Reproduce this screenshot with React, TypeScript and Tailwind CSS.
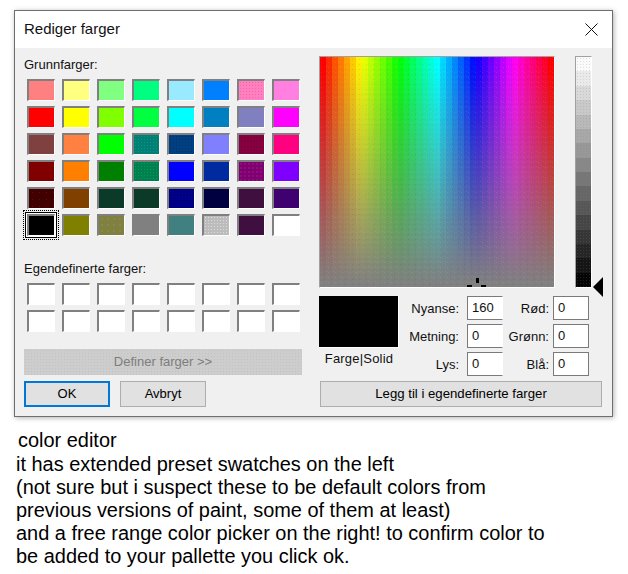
const DOT_PINK = 'bg-[radial-gradient(circle,#ff5f9f_0.6px,transparent_0.9px)] bg-[length:3px_3px]'
const DOT_TEAL = 'bg-[radial-gradient(circle,#0a8f9f_0.6px,transparent_0.9px)] bg-[length:3px_3px]'
const DOT_NAVY = 'bg-[radial-gradient(circle,#003070_0.6px,transparent_0.9px)] bg-[length:3px_3px]'
const DOT_GREEN = 'bg-[radial-gradient(circle,#00a050_0.6px,transparent_0.9px)] bg-[length:3px_3px]'
const DOT_WINE = 'bg-[radial-gradient(circle,#a00030_0.6px,transparent_0.9px)] bg-[length:3px_3px]'
const DOT_PURPLE = 'bg-[radial-gradient(circle,#a830a8_0.5px,transparent_0.8px)] bg-[length:4px_4px]'
const DOT_BLUE = 'bg-[radial-gradient(circle,#0000b0_0.6px,transparent_0.9px)] bg-[length:3px_3px]'
const DOT_ORANGE = 'bg-[radial-gradient(circle,#f09050_0.6px,transparent_0.9px)] bg-[length:5px_5px]'
const DOT_RED = 'bg-[radial-gradient(circle,#800000_0.6px,transparent_0.9px)] bg-[length:7px_7px]'
const DOT_OLIVE = 'bg-[radial-gradient(circle,#90a060_0.5px,transparent_0.8px)] bg-[length:6px_6px]'
const DOT_SILVER = 'bg-[radial-gradient(circle,#dcdcdc_0.6px,transparent_0.9px)] bg-[length:3px_3px]'

const presets: { color: string; dots?: string }[] = [
  { color: 'bg-[#ff8080]' },
  { color: 'bg-[#ffff80]' },
  { color: 'bg-[#80ff80]' },
  { color: 'bg-[#00ff80]' },
  { color: 'bg-[#99eaff]' },
  { color: 'bg-[#0080ff]' },
  { color: 'bg-[#ff80c0]', dots: DOT_PINK },
  { color: 'bg-[#ff80e0]' },
  { color: 'bg-[#ff0000]' },
  { color: 'bg-[#ffff00]' },
  { color: 'bg-[#80ff00]' },
  { color: 'bg-[#00ff40]' },
  { color: 'bg-[#00ffff]' },
  { color: 'bg-[#0080c0]' },
  { color: 'bg-[#8080c0]' },
  { color: 'bg-[#ff00ff]' },
  { color: 'bg-[#804040]' },
  { color: 'bg-[#ff8040]', dots: DOT_ORANGE },
  { color: 'bg-[#00ff00]' },
  { color: 'bg-[#008070]', dots: DOT_TEAL },
  { color: 'bg-[#004080]', dots: DOT_NAVY },
  { color: 'bg-[#8080ff]' },
  { color: 'bg-[#800040]', dots: DOT_WINE },
  { color: 'bg-[#ff0080]' },
  { color: 'bg-[#800000]' },
  { color: 'bg-[#ff8000]' },
  { color: 'bg-[#008000]' },
  { color: 'bg-[#008050]', dots: DOT_GREEN },
  { color: 'bg-[#0000ff]' },
  { color: 'bg-[#002ba0]' },
  { color: 'bg-[#800070]', dots: DOT_PURPLE },
  { color: 'bg-[#8000ff]' },
  { color: 'bg-[#400000]', dots: DOT_RED },
  { color: 'bg-[#804000]' },
  { color: 'bg-[#0b3b28]' },
  { color: 'bg-[#0b3b28]' },
  { color: 'bg-[#000080]', dots: DOT_BLUE },
  { color: 'bg-[#000040]' },
  { color: 'bg-[#3f103f]' },
  { color: 'bg-[#3f0070]' },
  { color: 'bg-[#000000]' },
  { color: 'bg-[#808000]' },
  { color: 'bg-[#808040]', dots: DOT_OLIVE },
  { color: 'bg-[#808080]' },
  { color: 'bg-[#408080]' },
  { color: 'bg-[#bcbcbc]', dots: DOT_SILVER },
  { color: 'bg-[#3f103f]' },
  { color: 'bg-[#ffffff]' },
]

const labelClass = 'text-[13px] leading-[15px] text-[#111]'
const buttonClass = 'h-[26px] border border-[#adadad] bg-[#e1e1e1] text-black'

function Swatch({ color, dots, selected }: { color: string; dots?: string; selected?: boolean }) {
  return (
    <div
      className={`relative h-[22px] w-[28px] border-t-2 border-r border-b border-l-2 border-t-[#808080] border-r-white border-b-white border-l-[#808080] ${color} ${
        selected ? 'shadow-[0_0_0_1px_#fff,0_0_0_2px_#000]' : ''
      }`}
    >
      {dots && <div className={`h-full w-full ${dots}`} />}
      {selected && <div className="absolute -top-[6px] -right-[5px] -bottom-[5px] -left-[6px] border border-dotted border-black" />}
    </div>
  )
}

function ColorField() {
  const cols = 39
  const rows = 38
  const cellW = 234 / cols
  const cellH = 230 / rows
  const cells = []
  for (let j = 0; j < rows; j++) {
    for (let i = 0; i < cols; i++) {
      const hue = (i / (cols - 1)) * 360
      const sat = 100 * (1 - j / (rows - 1))
      cells.push(
        <rect
          key={`${i}-${j}`}
          x={i * cellW}
          y={j * cellH}
          width={cellW + 0.5}
          height={cellH + 0.5}
          fill={`hsl(${hue}, ${sat}%, 50%)`}
        />,
      )
    }
  }
  return (
    <svg width="234" height="230" viewBox="0 0 234 230" shapeRendering="crispEdges" className="block">
      <defs>
        <pattern id="fieldDither" width="7" height="5" patternUnits="userSpaceOnUse">
          <rect x="1" y="0" width="1" height="1" fill="#fff" fillOpacity="0.1" />
          <rect x="4" y="2" width="1" height="1" fill="#000" fillOpacity="0.08" />
          <rect x="6" y="4" width="1" height="1" fill="#fff" fillOpacity="0.08" />
        </pattern>
      </defs>
      {cells}
      <rect width="234" height="230" fill="url(#fieldDither)" />
      <rect x="156" y="221" width="3" height="5" fill="#000" />
      <rect x="147" y="228" width="5" height="2" fill="#000" />
      <rect x="161" y="228" width="5" height="2" fill="#000" />
    </svg>
  )
}

function LuminanceBar() {
  const steps = 16
  const stepH = 230 / steps
  return (
    <svg width="15" height="230" viewBox="0 0 15 230" shapeRendering="crispEdges" className="block">
      <defs>
        <pattern id="barDither" width="3" height="3" patternUnits="userSpaceOnUse">
          <rect x="1" y="1" width="1" height="1" fill="#808080" fillOpacity="0.22" />
        </pattern>
      </defs>
      {Array.from({ length: steps }, (_, i) => {
        const v = Math.round(250 - (i / (steps - 1)) * 245)
        return <rect key={i} x="0" y={i * stepH} width="15" height={stepH + 0.5} fill={`rgb(${v},${v},${v})`} />
      })}
      <rect width="15" height="230" fill="url(#barDither)" />
    </svg>
  )
}

function ValueField({ label, value, second }: { label: string; value: string; second?: boolean }) {
  return (
    <div className="flex h-[24px] items-center">
      <span className={`${labelClass} text-right ${second ? 'w-[46px]' : 'w-[60px]'}`}>{label}</span>
      <input
        readOnly
        value={value}
        className={`h-[24px] w-[36px] border border-[#7a7a7a] bg-white pb-[2px] pl-[4px] text-[13px] text-[#111] outline-none ${
          second ? 'ml-[4px]' : 'ml-[8px] border-r-white'
        }`}
      />
    </div>
  )
}

export default function App() {
  return (
    <div className="h-[574px] w-[628px] overflow-hidden bg-white pt-[10px] font-['Liberation_Sans',Arial,sans-serif]">
      <div className="ml-[14px] h-[407px] w-[599px] border border-[#6e6e6e] bg-[#f0f0f0] shadow-[1px_1px_5px_rgba(0,0,0,0.3)]">
        <div className="flex h-[37px] items-center justify-between bg-white pr-[14px] pl-[9px]">
          <span className="text-[15px] text-[#111]">Rediger farger</span>
          <svg width="13" height="13" viewBox="0 0 13 13" className="block">
            <path d="M0.5 0.5 L12.5 12.5 M12.5 0.5 L0.5 12.5" stroke="#111" strokeWidth="1" fill="none" />
          </svg>
        </div>

        <div className="flex">
          <div className="box-content w-[278px] pt-[9px] pl-[9px]">
            <div className={labelClass}>Grunnfarger:</div>
            <div className="mt-[7px] ml-[3px] grid w-[273px] grid-cols-8 gap-x-[7px] gap-y-[5px]">
              {presets.map((p, i) => (
                <Swatch key={i} color={p.color} dots={p.dots} selected={i === 40} />
              ))}
            </div>

            <div className={`${labelClass} mt-[25px]`}>Egendefinerte farger:</div>
            <div className="mt-[7px] ml-[3px] grid w-[273px] grid-cols-8 gap-x-[7px] gap-y-[5px]">
              {Array.from({ length: 16 }, (_, i) => (
                <Swatch key={i} color="bg-white" />
              ))}
            </div>

            <button
              type="button"
              disabled
              className="mt-[17px] h-[26px] w-[278px] bg-[#cdcdcd] bg-[radial-gradient(circle,#c2c2c2_0.6px,transparent_0.9px)] bg-[length:3px_3px] text-[13px] text-[#7d7d7d]"
            >
              Definer farger &gt;&gt;
            </button>
            <div className="mt-[6px] flex gap-[10px]">
              <button type="button" className="h-[26px] w-[86px] border-2 border-[#0078d7] bg-[#e1e1e1] text-[13px] text-black">
                OK
              </button>
              <button type="button" className={`${buttonClass} w-[86px] text-[13px]`}>
                Avbryt
              </button>
            </div>
          </div>

          <div className="ml-[17px] w-[284px] pt-[8px]">
            <div className="flex">
              <div className="border-t border-r border-b border-l border-t-[#a0a0a0] border-r-white border-b-white border-l-[#a0a0a0]">
                <ColorField />
              </div>
              <div className="relative ml-[20px] border-t border-r border-b border-l border-t-[#a0a0a0] border-r-white border-b-white border-l-[#a0a0a0]">
                <LuminanceBar />
                <svg width="10" height="20" viewBox="0 0 10 20" className="absolute top-[220px] left-[17px]">
                  <path d="M10 0 V20 L0 10 Z" fill="#000" />
                </svg>
              </div>
            </div>

            <div className="mt-[8px] flex">
              <div className="w-[80px]">
                <div className="h-[52px] w-[80px] border-r border-b border-r-white border-b-white bg-black" />
                <div className={`${labelClass} mt-[3px] text-center tracking-[0.2px]`}>Farge|Solid</div>
              </div>
              <div className="flex flex-col gap-[4px]">
                <ValueField label="Nyanse:" value="160" />
                <ValueField label="Metning:" value="0" />
                <ValueField label="Lys:" value="0" />
              </div>
              <div className="flex flex-col gap-[4px]">
                <ValueField label="Rød:" value="0" second />
                <ValueField label="Grønn:" value="0" second />
                <ValueField label="Blå:" value="0" second />
              </div>
            </div>

            <button type="button" className={`${buttonClass} mt-[5px] ml-[1px] w-[282px] text-[13.2px]`}>
              Legg til i egendefinerte farger
            </button>
          </div>
        </div>
      </div>

      <div className="mt-[12px] pl-[16px] text-[19.95px] leading-[23px] text-black">
        <p className="h-[24px] pl-[2px]">color editor</p>
        <p>it has extended preset swatches on the left</p>
        <p>(not sure but i suspect these to be default colors from</p>
        <p>previous versions of paint, some of them at least)</p>
        <p>and a free range color picker on the right! to confirm color to</p>
        <p>be added to your pallette you click ok.</p>
      </div>
    </div>
  )
}
